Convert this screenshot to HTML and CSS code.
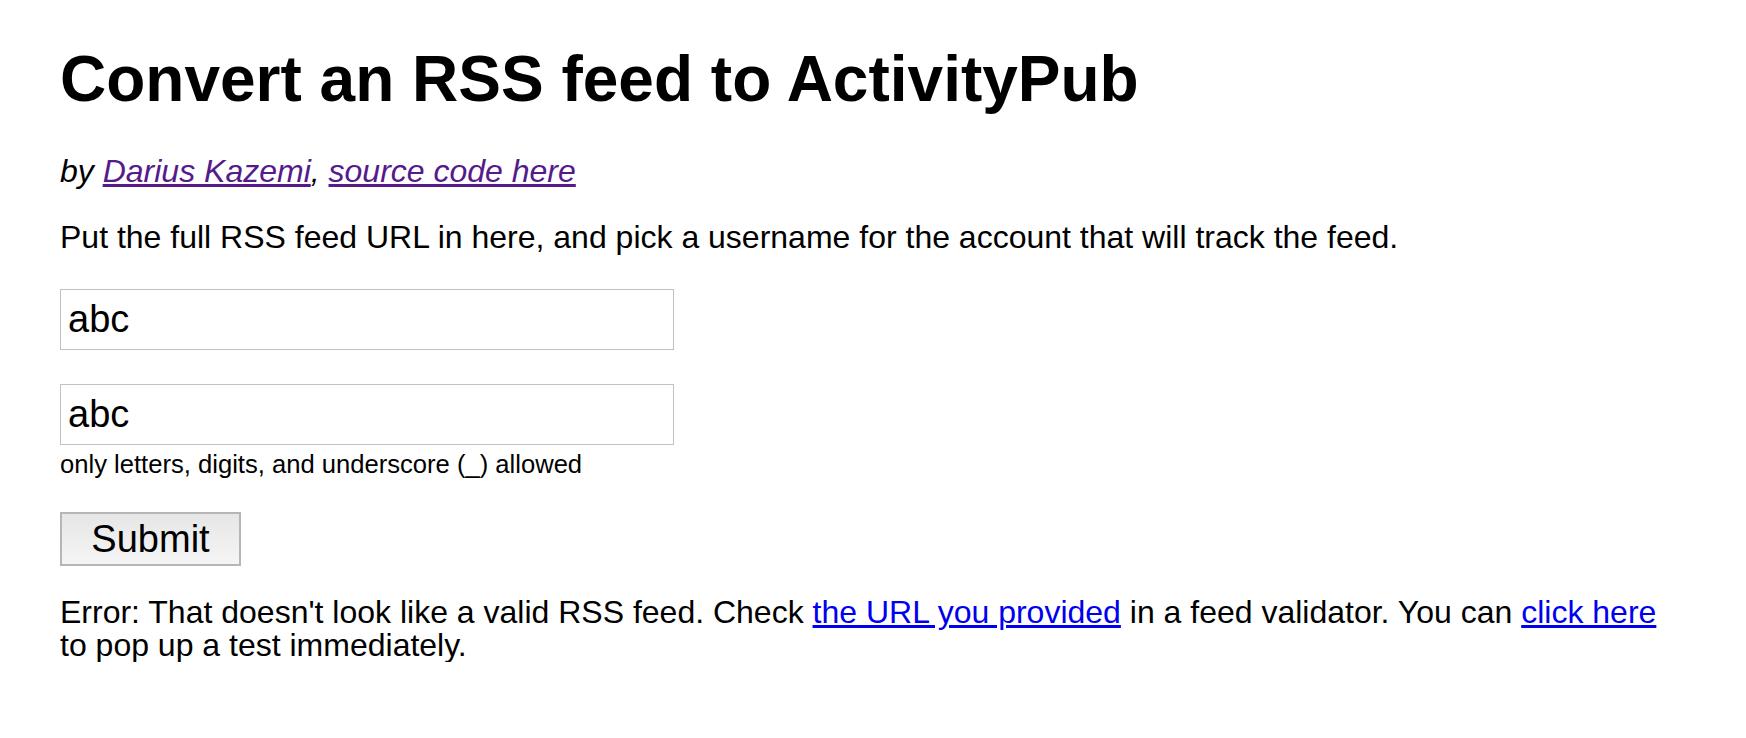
FILE: index.html
```html
<!DOCTYPE html>
<html lang="en">
<head>
<meta charset="utf-8">
<title>Convert an RSS feed to ActivityPub</title>
<link rel="stylesheet" href="styles.css">
</head>
<body>
<main class="page">
  <h1 class="title">Convert an RSS feed to ActivityPub</h1>
  <p class="byline">by <a class="visited" href="#">Darius Kazemi</a>, <a class="visited" href="#">source code here</a></p>
  <p class="intro">Put the full RSS feed URL in here, and pick a username for the account that will track the feed.</p>
  <form class="form">
    <input class="field" type="text" value="abc">
    <div class="field-group">
      <input class="field" type="text" value="abc">
      <div class="hint">only letters, digits, and underscore (_) allowed</div>
    </div>
    <button class="submit" type="button">Submit</button>
  </form>
  <p class="error">Error: That doesn't look like a valid RSS feed. Check <a class="link" href="#">the URL you provided</a> in a feed validator. You can <a class="link" href="#">click here</a> to pop up a test immediately.</p>
</main>
</body>
</html>
```

FILE: styles.css
```css
html, body {
  margin: 0;
  padding: 0;
  background: #ffffff;
}
body {
  font-family: "Liberation Sans", Arial, Helvetica, sans-serif;
  color: #000000;
}
.page {
  padding: 43px 60px 0 60px;
  font-size: 32px;
  line-height: 36px;
}
.title {
  font-size: 64px;
  font-weight: bold;
  line-height: 72px;
  margin: 0 0 38px 0;
}
.byline {
  font-style: italic;
  margin: 0 0 30px 0;
}
.visited {
  color: #551a8b;
}
.link {
  color: #0000ee;
}
.intro {
  margin: 0 0 34px 0;
}
.form {
  display: flex;
  flex-direction: column;
  align-items: flex-start;
}
.field {
  display: block;
  box-sizing: border-box;
  width: 614px;
  height: 61px;
  border: 1px solid #c2c2c2;
  padding: 0 7px;
  font-family: "Liberation Sans", Arial, sans-serif;
  font-size: 38px;
  color: #000;
  margin: 0;
  outline: none;
  background: #fff;
}
.field-group {
  margin-top: 34px;
}
.hint {
  font-size: 25.6px;
  line-height: 30px;
  margin-top: 4px;
}
.submit {
  box-sizing: border-box;
  width: 181px;
  height: 54px;
  margin: 33px 0 0 0;
  border: 2px solid #b6b6b6;
  background: linear-gradient(#e6e6e6, #f5f5f5);
  font-family: "Liberation Sans", Arial, sans-serif;
  font-size: 38px;
  color: #000;
  padding: 0;
}
.error {
  line-height: 33px;
  margin: 30px 0 0 0;
}
```
